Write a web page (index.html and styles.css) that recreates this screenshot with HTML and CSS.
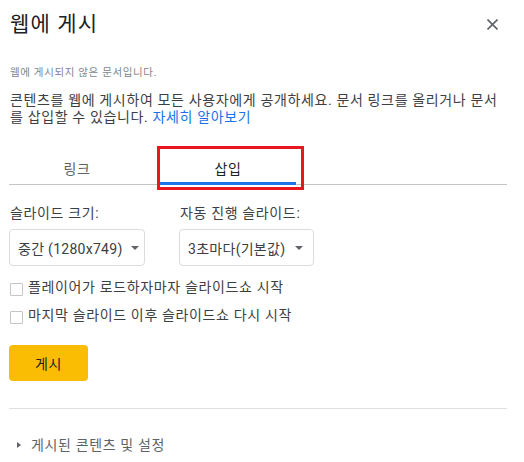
FILE: index.html
```html
<!DOCTYPE html>
<html lang="ko">

<head>
    <meta charset="UTF-8">
    <meta name="viewport" content="width=device-width, initial-scale=1.0">
    <title>웹에 게시</title>
    <link rel="stylesheet" href="styles.css">
</head>

<body>

    <div class="dialog">

        <!-- 標題列 -->
        <div class="header">
            <h1 class="title">웹에 게시</h1>
            <svg class="close" width="11" height="11" viewBox="0 0 11 11">
                <path d="M0.5 0.5 L10.5 10.5 M10.5 0.5 L0.5 10.5" stroke="#5f6368" stroke-width="1.6" fill="none"/>
            </svg>
        </div>

        <p class="status">웹에 게시되지 않은 문서입니다.</p>

        <p class="desc">콘텐츠를 웹에 게시하여 모든 사용자에게 공개하세요. 문서 링크를 올리거나 문서를 삽입할 수 있습니다. <a href="javascript:;" class="link">자세히 알아보기</a></p>

        <!-- 分頁 -->
        <div class="tabs">
            <div class="tab">링크</div>
            <div class="tab tab-active">삽입<span class="mark"></span></div>
        </div>

        <!-- 設定 -->
        <div class="fields">
            <div class="field">
                <div class="label">슬라이드 크기:</div>
                <div class="select select-size">
                    <span>중간 (1280x749)</span>
                    <span class="arrow"></span>
                </div>
            </div>
            <div class="field">
                <div class="label">자동 진행 슬라이드:</div>
                <div class="select select-auto">
                    <span>3초마다(기본값)</span>
                    <span class="arrow"></span>
                </div>
            </div>
        </div>

        <label class="check check-first">
            <span class="box"></span>
            <span>플레이어가 로드하자마자 슬라이드쇼 시작</span>
        </label>
        <label class="check">
            <span class="box"></span>
            <span>마지막 슬라이드 이후 슬라이드쇼 다시 시작</span>
        </label>

        <button class="publish">게시</button>

        <div class="divider"></div>

        <div class="more">
            <span class="tri"></span>
            <span>게시된 콘텐츠 및 설정</span>
        </div>

    </div>

</body>

</html>
```

FILE: styles.css
```css
* {
    margin: 0;
    padding: 0;
    box-sizing: border-box;
}

body {
    background-color: #fff;
    font-family: Roboto, "Noto Sans CJK KR", sans-serif;
    color: #3c4043;
    letter-spacing: 0.04em;
}

/* 外層容器 */
.dialog {
    width: 524px;
    padding: 10px 17px 0 9px;
}

.header {
    display: flex;
    justify-content: space-between;
    align-items: center;
}

.title {
    font-size: 21px;
    font-weight: 400;
    line-height: 28px;
    color: #202124;
    padding-left: 1px;
    letter-spacing: 0.055em;
}

.close {
    margin-right: 9px;
}

.status {
    margin-top: 27px;
    font-size: 10.5px;
    line-height: 16px;
    color: #80868b;
    padding-left: 1px;
}

.desc {
    margin-top: 11px;
    font-size: 14px;
    line-height: 17px;
    padding-left: 1px;
}

.link {
    display: inline-block;
    color: #1a73e8;
    text-decoration: none;
}

/* 分頁 */
.tabs {
    margin-top: 24px;
    display: flex;
    gap: 15px;
    height: 35px;
    border-bottom: 1px solid #c4c4c4;
}

.tab {
    width: 136px;
    height: 35px;
    padding-top: 9px;
    line-height: 20px;
    font-size: 14px;
    text-align: center;
    color: #5f6368;
    border-bottom: 3px solid transparent;
}

.tab-active {
    color: #202124;
    border-bottom-color: #1a73e8;
    position: relative;
}

/* 紅色標註框 */
.mark {
    position: absolute;
    left: -3px;
    top: -4px;
    right: -8px;
    bottom: -8px;
    border: 3px solid #e8161e;
}

.fields {
    margin-top: 18px;
    display: flex;
    gap: 34px;
}

.label {
    font-size: 14px;
    line-height: 20px;
    padding-left: 1px;
}

.select {
    margin-top: 6px;
    height: 37px;
    border: 1px solid #dadce0;
    border-radius: 4px;
    display: flex;
    align-items: center;
    gap: 8px;
    padding-left: 8px;
    font-size: 14px;
    color: #3c4043;
    letter-spacing: 0.02em;
}

.select-size {
    width: 136px;
}

.select-auto {
    width: 135px;
    gap: 10px;
}

.arrow {
    width: 0;
    height: 0;
    border-left: 4.5px solid transparent;
    border-right: 4.5px solid transparent;
    border-top: 4.5px solid #5f6368;
    margin-top: 1px;
}

/* 勾選框 */
.check {
    display: flex;
    align-items: center;
    gap: 5px;
    font-size: 14px;
    line-height: 20px;
    margin-top: 8px;
    padding-left: 1px;
}

.check-first {
    margin-top: 11px;
}

.box {
    width: 13px;
    height: 13px;
    border: 1px solid #c6c6c6;
    border-radius: 1px;
    margin-top: 4px;
}

.publish {
    margin-top: 20px;
    width: 79px;
    height: 36px;
    border: none;
    border-radius: 4px;
    background-color: #fbbc04;
    font-family: Roboto, "Noto Sans CJK KR", sans-serif;
    font-size: 14px;
    letter-spacing: 0.04em;
    color: #202124;
}

.divider {
    margin-top: 27px;
    height: 1px;
    background-color: #e0e0e0;
}

.more {
    margin-top: 26px;
    display: flex;
    align-items: center;
    font-size: 14px;
    line-height: 20px;
    color: #5f6368;
}

.tri {
    width: 0;
    height: 0;
    margin-left: 8px;
    margin-right: 10px;
    border-top: 3.5px solid transparent;
    border-bottom: 3.5px solid transparent;
    border-left: 4px solid #5f6368;
}
```
